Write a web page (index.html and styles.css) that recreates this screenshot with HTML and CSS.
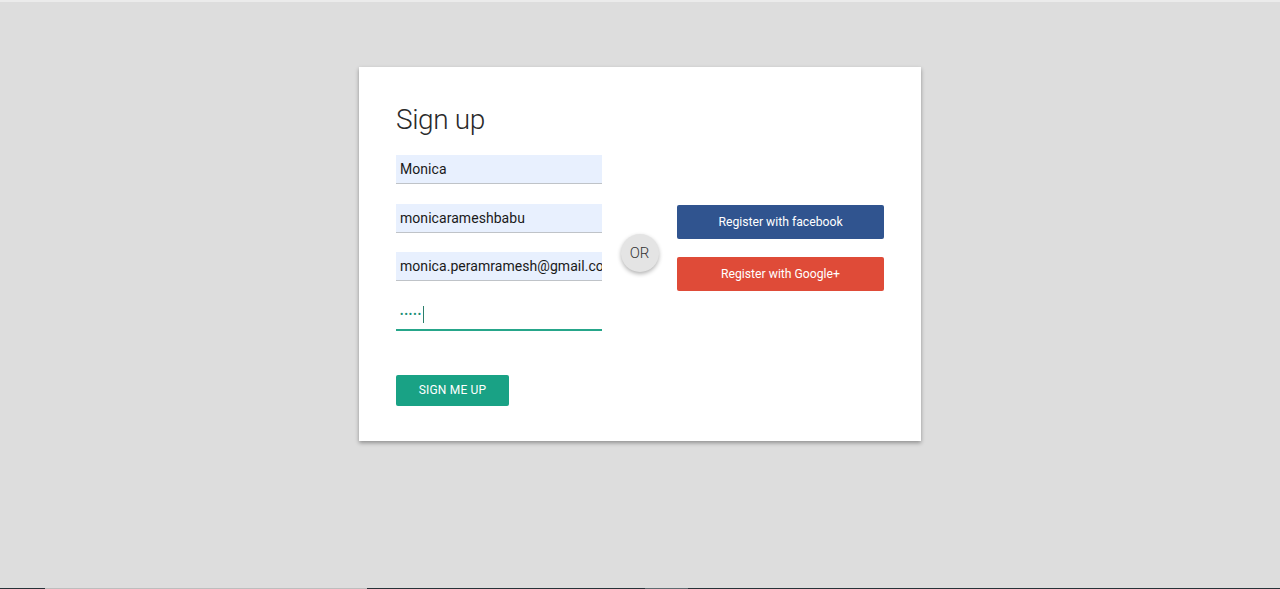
FILE: index.html
```html
<!DOCTYPE html>
<html lang="en">
<head>
<meta charset="utf-8">
<title>Sign up</title>
<link rel="stylesheet" href="styles.css">
</head>
<body>
<div class="topband"></div>
<main class="page">
  <section class="card">
    <h1 class="title">Sign up</h1>
    <div class="columns">
      <div class="form-col">
        <div class="field autofill">Monica</div>
        <div class="field autofill">monicarameshbabu</div>
        <div class="field autofill">monica.peramramesh@gmail.com</div>
        <div class="field active"><span class="dots">•••••</span><span class="caret"></span></div>
        <button class="btn-signup" type="button">SIGN ME UP</button>
      </div>
      <div class="or-col"><div class="or">OR</div></div>
      <div class="social-col">
        <button class="btn-social fb" type="button">Register with facebook</button>
        <button class="btn-social gp" type="button">Register with Google+</button>
      </div>
    </div>
  </section>
</main>
<div class="taskbar">
  <span class="seg dark w45"></span>
  <span class="seg light w322"></span>
  <span class="seg dark w278"></span>
  <span class="seg mid w43"></span>
  <span class="seg dark grow"></span>
</div>
</body>
</html>
```
FILE: styles.css
```css
html, body {
  margin: 0;
  padding: 0;
}
body {
  background: #dddddd;
  font-family: Roboto, "Liberation Sans", Arial, sans-serif;
  min-height: 100vh;
  display: flex;
  flex-direction: column;
}
.topband {
  height: 2px;
  background: #ebebeb;
}
.page {
  flex: 1;
  display: flex;
  justify-content: center;
  align-items: flex-start;
  padding-top: 65px;
}
.card {
  width: 562px;
  box-sizing: border-box;
  background: #ffffff;
  padding: 36px 37px 35px 37px;
  box-shadow: 0 2px 4px rgba(0, 0, 0, 0.35);
}
.title {
  margin: 0 0 19px 0;
  font-size: 28px;
  font-weight: 300;
  letter-spacing: -0.4px;
  line-height: 33px;
  color: #2a2a2a;
}
.columns {
  display: flex;
  align-items: flex-start;
}
.form-col {
  width: 206px;
  display: flex;
  flex-direction: column;
}
.field {
  box-sizing: border-box;
  height: 29px;
  margin-bottom: 19.5px;
  padding: 0 3px 0 4px;
  border-bottom: 1px solid #bfc3c8;
  font-size: 14px;
  letter-spacing: 0.05px;
  line-height: 28px;
  color: #1a1a1a;
  white-space: nowrap;
  overflow: hidden;
}
.field.autofill {
  background: #e8f0fe;
}
.field.active {
  height: 30px;
  border-bottom: 2px solid #26a68a;
  display: flex;
  align-items: center;
  background: #fff;
}
.dots {
  font-size: 9px;
  font-weight: 700;
  letter-spacing: 1.2px;
  color: #1b8f76;
  line-height: 1;
}
.caret {
  width: 1px;
  height: 17px;
  margin-left: 1px;
  background: #2b7f6c;
}
.btn-signup {
  margin-top: 24.5px;
  width: 113px;
  height: 31px;
  border: none;
  border-radius: 2px;
  background: #19a285;
  color: #fff;
  font-family: Roboto, "Liberation Sans", Arial, sans-serif;
  font-size: 12px;
  font-weight: 400;
  letter-spacing: 0.2px;
  padding: 0;
  cursor: pointer;
}
.or-col {
  width: 75px;
  display: flex;
  justify-content: center;
  padding-top: 79px;
}
.or {
  width: 38px;
  height: 38px;
  border-radius: 50%;
  background: #e4e4e4;
  box-shadow: 0 2px 4px rgba(0, 0, 0, 0.3);
  display: flex;
  align-items: center;
  justify-content: center;
  font-size: 15px;
  font-weight: 300;
  color: #333;
}
.social-col {
  width: 207px;
  display: flex;
  flex-direction: column;
  gap: 18px;
  padding-top: 50px;
}
.btn-social {
  height: 34px;
  width: 207px;
  border: none;
  border-radius: 2px;
  color: #fff;
  font-family: Roboto, "Liberation Sans", Arial, sans-serif;
  font-size: 12.2px;
  padding: 0;
  cursor: pointer;
}
.btn-social.fb {
  background: #30548f;
}
.btn-social.gp {
  background: #df4b38;
}
.taskbar {
  height: 1px;
  display: flex;
}
.seg { display: block; height: 1px; }
.seg.dark { background: #263238; }
.seg.light { background: #bdbdbd; }
.seg.mid { background: #5f6b70; }
.w45 { width: 45px; }
.w322 { width: 322px; }
.w278 { width: 278px; }
.w43 { width: 43px; }
.grow { flex: 1; }
```
